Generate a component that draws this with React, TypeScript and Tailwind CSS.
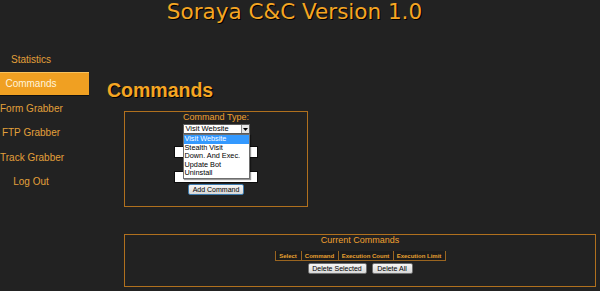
const menu = ['Statistics', 'Commands', 'Form Grabber', 'FTP Grabber', 'Track Grabber', 'Log Out'];
const commandTypes = ['Visit Website', 'Stealth Visit', 'Down. And Exec.', 'Update Bot', 'Uninstall'];
const columns = [
  { label: 'Select', w: 'w-[26px]' },
  { label: 'Command', w: 'w-[37px]' },
  { label: 'Execution Count', w: 'w-[55px]' },
  { label: 'Execution Limit', w: 'w-[52px]' },
];

export default function App() {
  return (
    <div className="h-[291px] w-full overflow-hidden bg-[#222222] font-['Liberation_Sans',Arial,sans-serif]">
      <h1 className="h-[26px] pr-[11px] text-center font-['DejaVu_Sans',sans-serif] text-[21.5px] leading-[24px] text-[#f5a623] [text-shadow:1px_1px_0_#000]">
        Soraya C&amp;C Version 1.0
      </h1>
      <div className="flex">
        <Sidebar />
        <Main />
      </div>
    </div>
  );
}

function Sidebar() {
  return (
    <nav className="flex w-[89px] shrink-0 flex-col pt-[21px]">
      {menu.map((item) => {
        const active = item === 'Commands';
        return (
          <a
            key={item}
            className={
              active
                ? 'flex h-[24.5px] items-center border-t border-b border-t-[#f8c25e] border-b-[#111] bg-[#f0a022] text-[#fff4dc]'
                : 'flex h-[24.5px] items-center text-[#e3a03a]'
            }
          >
            <span className="w-[62px] whitespace-nowrap text-center text-[10px]">{item}</span>
          </a>
        );
      })}
    </nav>
  );
}

function Main() {
  return (
    <main className="flex-1 pt-[54px]">
      <h2 className="pl-[18px] text-[19.5px] font-bold leading-[20px] text-[#f5a623] [text-shadow:1px_1px_0_#000]">
        Commands
      </h2>
      <AddCommandForm />
      <CurrentCommands />
    </main>
  );
}

function Button({ children, width, blue }: { children: string; width: string; blue?: boolean }) {
  return (
    <button
      className={
        width +
        (blue ? ' border-[#3d7bad]' : ' border-[#6f6f6f]') +
        ' block h-[11px] shrink-0 rounded-[2px] border bg-gradient-to-b from-[#f6f6f6] to-[#d8d8d8] text-[7px] leading-[9px] text-black'
      }
    >
      {children}
    </button>
  );
}

function AddCommandForm() {
  return (
    <section className="ml-[35px] mt-[11px] flex h-[96px] w-[184px] flex-col items-center border border-[#b0701e]">
      <p className="h-[11px] text-[9px] leading-[11px] text-[#f0a030]">Command Type:</p>
      <div className="relative z-10 mt-[1px] h-[10px] w-[67px] border border-[#5a5a5a] bg-white">
        <span className="block pl-[2px] text-[7.5px] leading-[8px] text-black">Visit Website</span>
        <span className="absolute top-0 right-0 flex h-[8px] w-[8px] items-center justify-center border-l border-[#8a8a8a] bg-[#e6e6e6]">
          <svg width="5" height="3" viewBox="0 0 5 3">
            <path d="M0 0h5L2.5 3z" fill="#000" />
          </svg>
        </span>
        <ul className="absolute top-[9px] left-[-1px] w-[67px] border border-[#6e6e6e] bg-white shadow-[1px_1px_1px_rgba(0,0,0,0.4)]">
          {commandTypes.map((t, i) => (
            <li
              key={t}
              className={
                (i === 0 ? 'bg-[#3399ff] text-white ' : 'text-black ') +
                'h-[8.6px] pl-[1px] text-[7.3px] leading-[8.6px]'
              }
            >
              {t}
            </li>
          ))}
        </ul>
      </div>
      <input className="mt-[12px] block h-[12px] w-[84px] border border-[#0c0c0c] bg-white" />
      <input className="mt-[13px] block h-[12px] w-[84px] border border-[#0c0c0c] bg-white" />
      <div className="mt-[1px] flex">
        <Button width="w-[56px]" blue>
          Add Command
        </Button>
      </div>
    </section>
  );
}

function CurrentCommands() {
  return (
    <section className="ml-[35px] mt-[27px] flex h-[53px] w-[472px] flex-col items-center border border-[#b0701e]">
      <p className="h-[11px] text-[9px] leading-[11px] text-[#f0a030]">Current Commands</p>
      <div className="mt-[5px] flex h-[10px] border-b border-l border-[#9a6520] bg-[#1c1c1c]">
        {columns.map((c) => (
          <div
            key={c.label}
            className={
              c.w +
              ' flex items-center justify-center border-r border-[#9a6520] text-[6px] font-bold leading-[8px] text-[#e8a030]'
            }
          >
            {c.label}
          </div>
        ))}
      </div>
      <div className="mt-[2px] flex gap-[5px]">
        <Button width="w-[59px]">Delete Selected</Button>
        <Button width="w-[41px]">Delete All</Button>
      </div>
    </section>
  );
}
